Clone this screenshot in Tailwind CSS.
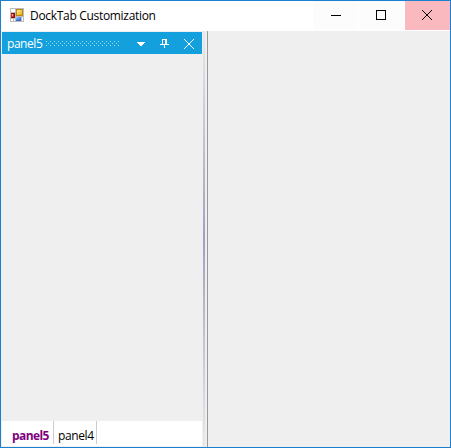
<!DOCTYPE html>
<html lang="en"><head><meta charset="utf-8"><title>DockTab Customization</title>
<script src="https://cdn.jsdelivr.net/npm/@tailwindcss/browser@4"></script></head>
<body class="w-[451px] h-[448px] overflow-hidden font-['Open_Sans',sans-serif] text-[12px] leading-4 text-black">
<div class="w-[451px] h-[448px] border border-[#1b7fd2] bg-[#efefef] flex flex-col">
  <header class="h-[30px] shrink-0 bg-white flex items-start">
    <svg class="ml-[9px] mt-[7px] shrink-0" width="14" height="14" viewBox="0 0 14 14" shape-rendering="crispEdges">
      <defs>
        <linearGradient id="y" x2="1" y2="1"><stop stop-color="#fff0a0"/><stop offset="1" stop-color="#e8a800"/></linearGradient>
        <linearGradient id="b" x2="1" y2="1"><stop stop-color="#a0c8ff"/><stop offset="1" stop-color="#2860d0"/></linearGradient>
      </defs>
      <path fill="#bcbcbc" d="M0 0h14v14H0z"/>
      <path fill="#fff" d="M1 1h4v3H1zM1 11h2v2H1zM4 11h1v2H4zM12 9h1v4h-1z"/>
      <path fill="#b88810" d="M6 1h7v7H6z"/><path fill="url(#y)" d="M7 2h5v5H7z"/>
      <path fill="#8c1008" d="M1 5h4v5H1z"/><path fill="#d83020" d="M1 6h3v3H1z"/><path fill="#ffa090" d="M2 6h1v2H2z"/>
      <path fill="#3868c8" d="M6 9h5v4H6z"/><path fill="url(#b)" d="M6 9h5v3H6z"/>
    </svg>
    <h1 class="ml-[6px] mt-[7px] w-[284px] whitespace-nowrap font-normal tracking-[-0.31px]">DockTab Customization</h1>
    <div class="flex ml-auto">
      <div class="w-[45px] h-[29px] bg-[#fcfcfc]"><svg width="45" height="29" shape-rendering="crispEdges"><path d="M18 14h10v1H18z"/></svg></div>
      <div class="w-[45px] h-[29px] ml-px bg-[#fcfcfc]"><svg width="45" height="29" shape-rendering="crispEdges"><path d="M17.500 9.500h9v9h-9z" fill="none" stroke="#000"/></svg></div>
      <div class="w-[45px] h-[29px] ml-px bg-[#f9b9be]"><svg width="45" height="29"><path d="M17 9l10 10M27 9L17 19" stroke="#000" stroke-width="1"/></svg></div>
    </div>
  </header>
  <main class="flex flex-1 min-h-0">
    <section class="ml-px w-[200px] flex flex-col">
      <div class="mt-px h-[22px] shrink-0 bg-[#149fdd] text-white flex items-start">
        <span class="ml-[5px] mt-[4px] w-[39px] shrink-0 tracking-[-0.45px]">panel5</span>
        <svg class="mt-[9px] shrink-0" width="75" height="6" shape-rendering="crispEdges">
          <defs><pattern id="dots" width="4" height="4" patternUnits="userSpaceOnUse"><path fill="#a5daf2" d="M0 0h1v1H0zM2 2h1v1H2z"/></pattern></defs>
          <rect width="74" height="5" fill="url(#dots)"/>
        </svg>
        <svg class="shrink-0" width="79" height="22" shape-rendering="crispEdges" fill="#fff">
          <path d="M16 10h8v1h-1v1h-1v1h-1v1h-2v-1h-1v-1h-1v-1h-1z"/>
          <path fill-rule="evenodd" d="M41 7h5v5h2v1h-4v3h-1v-3h-4v-1h2zM42 8v4h2V8z"/>
          <path d="M63 7l10 10M73 7l-10 10" stroke="#fff" stroke-width="1" shape-rendering="auto"/>
        </svg>
      </div>
      <div class="flex-1"></div>
      <nav class="h-[25px] mb-px shrink-0 bg-white flex items-start">
        <div class="w-[52px] h-[23px] border-r border-[#ccc] pl-[10px] pt-[7px] font-bold text-[#800080] tracking-[-0.6px]">panel5</div>
        <div class="w-[43px] h-[23px] border-r border-[#ccc] pl-[4px] pt-[7px] tracking-[-0.4px]">panel4</div>
      </nav>
    </section>
    <div class="ml-px w-[2px] bg-linear-to-b from-[#e9eaec] via-[#a0a0bd] to-[#e9eaec]"></div>
    <div class="ml-[2px] w-px bg-[#999]"></div>
    <section class="flex-1"></section>
  </main>
</div>
</body></html>
